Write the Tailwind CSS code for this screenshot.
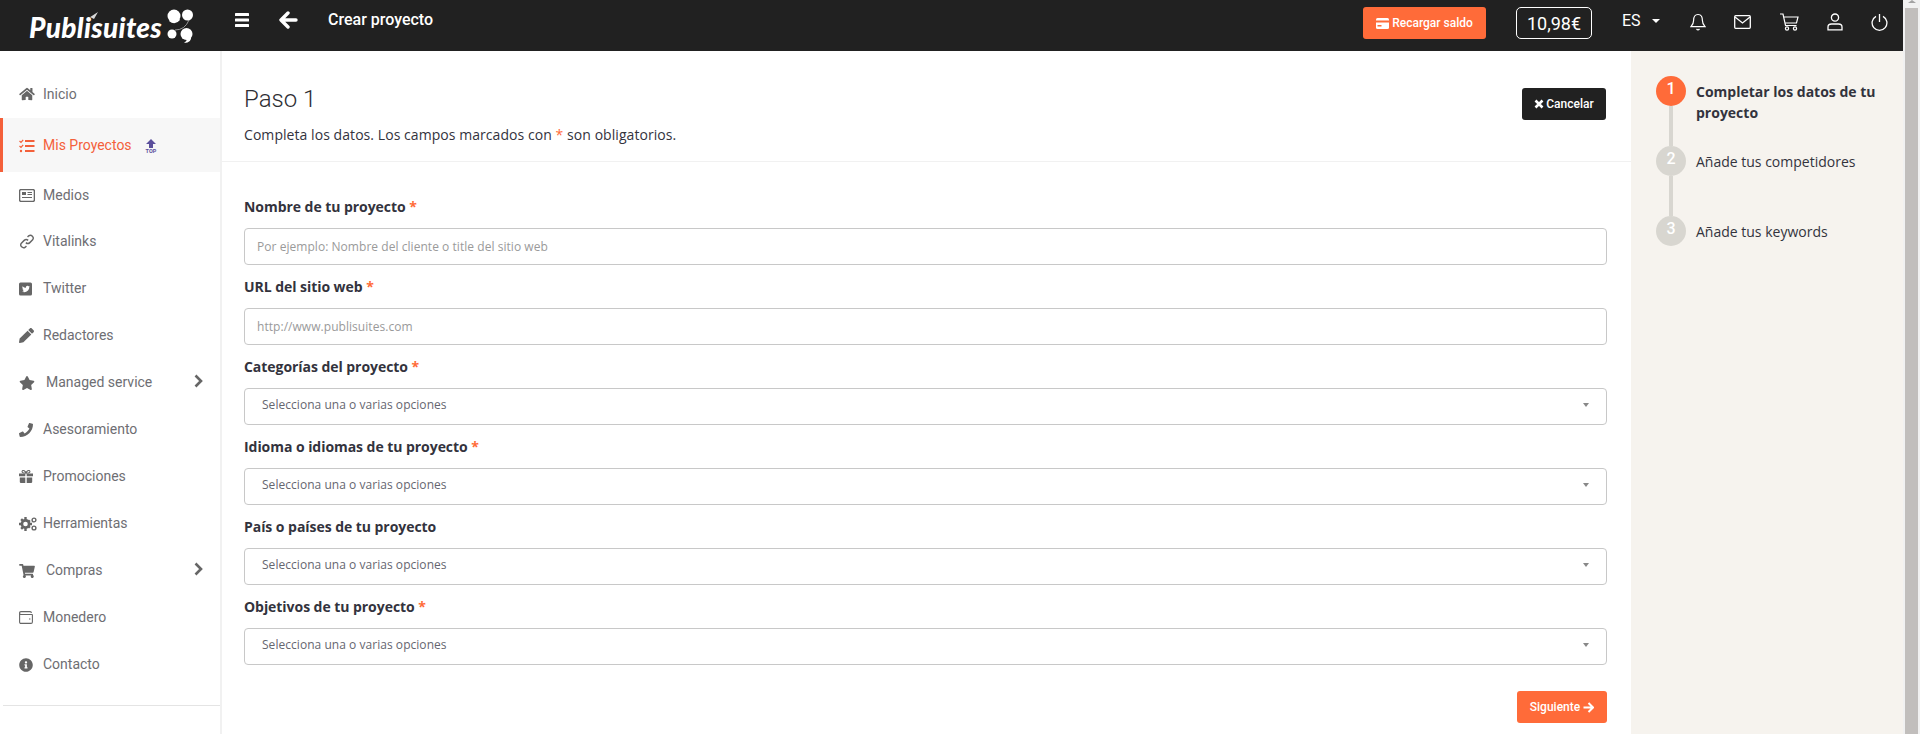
<!DOCTYPE html>
<html lang="es">
<head>
    <meta charset="UTF-8">
    <meta name="viewport" content="width=device-width, initial-scale=1.0">
    <title>Crear proyecto</title>
    <script src="https://cdn.jsdelivr.net/npm/@tailwindcss/browser@4"></script>
</head>
<body class="bg-white font-['Open_Sans',sans-serif] text-[14px] text-[#33333d]">
<div class="flex h-[734px] w-[1920px] overflow-hidden">
    <div class="w-[1903px] shrink-0 flex flex-col">
        <!-- Top bar -->
        <header class="h-[51px] shrink-0 bg-[#212121] flex items-start text-white font-['Roboto',sans-serif]">
            <div class="w-[235px] shrink-0 pl-[29px] pt-[9px] flex items-start">
                <span class="relative font-['Lato',sans-serif] font-black italic text-[28px] leading-[36px] tracking-[0.3px]">Publisuites
                    <svg class="absolute left-[55px] top-[3px]" width="15" height="10" viewBox="0 0 15 10"><path d="M0 9 L14 0 L10 7 L6 5 Z" fill="#d8d8d8"/></svg>
                </span>
                <svg class="ml-[5px] -mt-[0px]" width="26" height="35" viewBox="0 0 26 35" fill="white">
                    <circle cx="7" cy="7" r="6.5"/><circle cx="20.5" cy="6" r="5.5"/><circle cx="5" cy="25" r="4.5"/><circle cx="19.5" cy="25" r="6"/>
                    <path d="M2 12 Q8 17 13 11 L11 8Z M24 27 Q25 34 17 34 Q21 31 20 28Z"/><path d="M8 21 Q18 21 22 11" fill="none" stroke="#ddd" stroke-width=".6"/>
                </svg>
            </div>
            <svg class="mt-[13px] shrink-0" width="14" height="14" viewBox="0 0 14 14" fill="white"><rect width="14" height="3" y="0" rx=".6"/><rect width="14" height="3" y="5.5" rx=".6"/><rect width="14" height="3" y="11" rx=".6"/></svg>
            <svg class="mt-[11px] ml-[30px] shrink-0" width="19" height="18" viewBox="0 0 19 18" fill="none" stroke="white" stroke-width="3.4" stroke-linecap="round" stroke-linejoin="round"><path d="M9 2 L2 9 L9 16 M3 9 H17"/></svg>
            <h1 class="ml-[30px] mt-[10px] text-[16px] leading-[20px] font-medium">Crear proyecto</h1>
            <div class="ml-auto flex items-start pr-[15px]">
                <button class="mt-[7px] h-[32px] w-[123px] rounded-[3px] bg-[#ff6b39] flex items-center justify-center gap-[3px] text-[12px] font-medium">
                    <svg width="13" height="11" viewBox="0 0 13 11"><rect width="13" height="11" rx="1.5" fill="#fff"/><rect y="2.5" width="13" height="2" fill="#ff6b39"/><rect x="1.5" y="7" width="4" height="1.5" fill="#ff6b39"/></svg>
                    Recargar saldo
                </button>
                <div class="mt-[7px] ml-[30px] h-[32px] w-[76px] rounded-[5px] border border-white flex items-center justify-center text-[18px]">10,98€</div>
                <div class="ml-[30px] mt-[11px] w-[60px] flex items-center text-[16px] leading-[20px]">ES<span class="ml-[11px] mt-[-1px] border-x-[4px] border-t-[4px] border-x-transparent border-t-white"></span></div>
                <svg class="mt-[13px] ml-[8px]" width="16" height="18" viewBox="0 0 16 18" fill="none" stroke="white" stroke-width="1.2"><path d="M8 1.5 C4.5 1.5 3.6 4.5 3.6 7.5 C3.6 10.5 2.5 12 1 13.6 H15 C13.5 12 12.4 10.5 12.4 7.5 C12.4 4.5 11.5 1.5 8 1.5Z"/><path d="M6.5 16 Q8 17.6 9.5 16"/></svg>
                <svg class="mt-[15px] ml-[28px]" width="17" height="14" viewBox="0 0 17 14" fill="none" stroke="white" stroke-width="1.3"><rect x=".7" y=".7" width="15.6" height="12.6" rx="1"/><path d="M1 2 L8.5 8 L16 2"/></svg>
                <svg class="mt-[13px] ml-[29px]" width="19" height="18" viewBox="0 0 19 18" fill="none" stroke="white" stroke-width="1.2"><path d="M0 1 H3 L5.5 12.5 H16.5 M3.8 4 H18 L16.5 10 H5"/><circle cx="7" cy="15.5" r="1.6"/><circle cx="15" cy="15.5" r="1.6"/></svg>
                <svg class="mt-[13px] ml-[28px]" width="16" height="18" viewBox="0 0 16 18" fill="none" stroke="white" stroke-width="1.3"><circle cx="8" cy="4.6" r="3.6"/><path d="M1 16.8 V14 Q1 11 4.5 11 H11.5 Q15 11 15 14 V16.8 Z"/></svg>
                <svg class="mt-[13px] ml-[28px]" width="17" height="18" viewBox="0 0 17 18" fill="none" stroke="white" stroke-width="1.3"><path d="M5 3.4 A7.4 7.4 0 1 0 12 3.4"/><path d="M8.5 1 V9"/></svg>
            </div>
        </header>

        <div class="flex flex-1 min-h-0">
            <!-- Sidebar -->
            <aside class="w-[222px] shrink-0 border-r-2 border-[#f1f1f1] pt-[19px] font-['Roboto',sans-serif] text-[14px] text-[#6e6e73]">
                <nav class="flex flex-col">
                    <a class="h-[48px] flex items-center pl-[19px] gap-[8px]">
                        <svg class="w-[16px] h-[14px]" viewBox="0 0 576 512" fill="#666"><path d="M280.37 148.26L96 300.11V464a16 16 0 0 0 16 16l112.06-.29a16 16 0 0 0 15.92-16V368a16 16 0 0 1 16-16h64a16 16 0 0 1 16 16v95.64a16 16 0 0 0 16 16.05L464 480a16 16 0 0 0 16-16V300L295.67 148.26a12.19 12.19 0 0 0-15.3 0zM571.6 251.47L488 182.56V44.05a12 12 0 0 0-12-12h-56a12 12 0 0 0-12 12v72.61L318.47 43a48 48 0 0 0-61 0L4.34 251.47a12 12 0 0 0-1.6 16.9l25.5 31A12 12 0 0 0 45.15 301l235.22-193.74a12.19 12.19 0 0 1 15.3 0L530.9 301a12 12 0 0 0 16.9-1.6l25.5-31a12 12 0 0 0-1.7-16.93z"/></svg>
                        Inicio
                    </a>
                    <a class="h-[54px] pt-[1px] flex items-center pl-[16px] gap-[8px] border-l-[3px] border-[#f4603a] bg-[#f7f7f7] text-[#f4603a]">
                        <svg class="w-[16px] h-[14px]" viewBox="0 0 16 14" fill="none" stroke="#f4603a"><path d="M.5 2 L2 3.4 L4.2.8 M.5 7 L2 8.4 L4.2 5.8" stroke-width="1.2"/><circle cx="2" cy="12" r="1.2" fill="#f4603a" stroke="none"/><path d="M6 2 H15.5 M6 7 H15.5 M6 12 H15.5" stroke-width="2"/></svg>
                        Mis Proyectos
                        <span class="ml-[6px] mt-[1px] flex flex-col items-center">
                            <svg width="10" height="9" viewBox="0 0 10 9" fill="#5b4f9c"><path d="M5 0 L10 5 H7 V9 H3 V5 H0Z"/></svg>
                            <span class="text-[5.5px] leading-[6px] font-bold text-[#5b4f9c]">TOP</span>
                        </span>
                    </a>
                    <a class="h-[46px] flex items-center pl-[19px] gap-[8px]">
                        <svg class="w-[16px] h-[13px]" viewBox="0 0 16 13" fill="none" stroke="#666"><rect x=".6" y=".6" width="14.8" height="11.8" rx="1.5" stroke-width="1.4"/><rect x="3" y="3" width="4" height="3" fill="#666" stroke="none"/><path d="M8.5 3.5 H13 M8.5 5.5 H13 M3 8.5 H13" stroke-width="1.1"/></svg>
                        Medios
                    </a>
                    <a class="h-[47px] flex items-center pl-[19px] gap-[8px]">
                        <svg class="w-[16px] h-[15px]" viewBox="0 0 16 16" fill="none" stroke="#666" stroke-width="1.5"><path d="M6.8 9.2 a3 3 0 0 0 4.2 0 l3-3 a3 3 0 0 0-4.2-4.2 L8.6 3.2"/><path d="M9.2 6.8 a3 3 0 0 0-4.2 0 l-3 3 a3 3 0 0 0 4.2 4.2 L7.4 12.8"/></svg>
                        Vitalinks
                    </a>
                    <a class="h-[47px] flex items-center pl-[19px] gap-[8px]">
                        <svg class="w-[14px] h-[14px] mr-[2px]" viewBox="0 0 14 14"><rect width="13" height="13" y=".5" rx="1.5" fill="#666"/><path d="M3 9.8 Q6.5 11 9 8.5 Q10.5 6.8 10.3 5 L11 4.2 L10 4.4 Q9 3.2 7.6 4 Q6.7 4.7 7 5.8 Q5 5.7 3.5 4.2 Q2.9 5.6 4 6.6 L3.3 6.5 Q3.5 7.7 4.6 8.1 L4 8.2 Q4.4 9 5.2 9.1 Q4.2 9.8 3 9.8Z" fill="#fff"/></svg>
                        Twitter
                    </a>
                    <a class="h-[47px] flex items-center pl-[19px] gap-[8px]">
                        <svg class="w-[15px] h-[15px] mr-[1px]" viewBox="0 0 512 512" fill="#666"><path d="M497.9 142.1l-46.1 46.1c-4.7 4.7-12.3 4.7-17 0l-111-111c-4.7-4.7-4.7-12.3 0-17l46.1-46.1c18.7-18.7 49.1-18.7 67.9 0l60.1 60.1c18.8 18.7 18.8 49.1 0 67.9zM284.2 99.8L21.6 362.4.4 483.9c-2.9 16.4 11.4 30.6 27.8 27.8l121.5-21.3 262.6-262.6c4.7-4.7 4.7-12.3 0-17l-111-111c-4.8-4.7-12.4-4.7-17.1 0z"/></svg>
                        Redactores
                    </a>
                    <a class="h-[47px] flex items-center pl-[19px] pr-[17px] gap-[11px]">
                        <svg class="w-[16px] h-[14px]" viewBox="0 0 576 512" fill="#666"><path d="M259.3 17.8L194 150.2 47.9 171.5c-26.2 3.8-36.7 36.1-17.7 54.6l105.7 103-25 145.5c-4.5 26.3 23.2 46 46.4 33.7L288 439.6l130.7 68.7c23.2 12.2 50.9-7.4 46.4-33.7l-25-145.5 105.7-103c19-18.5 8.5-50.8-17.7-54.6L382 150.2 316.7 17.8c-11.7-23.6-45.6-23.9-57.4 0z"/></svg>
                        Managed service
                        <svg class="ml-auto -mt-[4px]" width="9" height="14" viewBox="0 0 9 14" fill="none" stroke="#666" stroke-width="2.6"><path d="M1.5 1.5 L7 7 L1.5 12.5"/></svg>
                    </a>
                    <a class="h-[47px] flex items-center pl-[19px] gap-[8px]">
                        <svg class="w-[14px] h-[14px] mr-[2px]" viewBox="0 0 512 512" fill="#666"><path d="M493.4 24.6l-104-24c-11.3-2.6-22.9 3.3-27.5 13.9l-48 112c-4.2 9.8-1.4 21.3 6.9 28l60.6 49.6c-36 76.7-98.9 140.5-177.2 177.2l-49.6-60.6c-6.8-8.3-18.2-11.1-28-6.9l-112 48C3.9 366.5-2 378.1.6 389.4l24 104C27.1 504.2 36.7 512 48 512c256.1 0 464-207.5 464-464 0-11.2-7.7-20.9-18.6-23.4z"/></svg>
                        Asesoramiento
                    </a>
                    <a class="h-[47px] flex items-center pl-[19px] gap-[8px]">
                        <svg class="w-[14px] h-[13px] mr-[2px]" viewBox="0 0 14 13" fill="#666"><path d="M0 3.5 H6.3 V6.3 H0Z M7.7 3.5 H14 V6.3 H7.7Z M.8 7.5 H6.3 V13 H2 Q.8 13 .8 12Z M7.7 7.5 H13.2 V12 Q13.2 13 12 13 H7.7Z"/><path d="M7 3 Q3 3.4 3 1.6 Q3.6 0 5.2.8 Q6.5 1.6 7 3 Q7.5 1.6 8.8.8 Q10.4 0 11 1.6 Q11 3.4 7 3Z" fill="none" stroke="#666" stroke-width="1.1"/></svg>
                        Promociones
                    </a>
                    <a class="h-[47px] flex items-center pl-[19px] gap-[6px]">
                        <svg class="w-[18px] h-[14px]" viewBox="0 0 18 14" fill="#666"><circle cx="6.5" cy="7" r="3.6" fill="none" stroke="#666" stroke-width="2.6"/><path d="M5.3 0 H7.7 V3 H5.3Z M5.3 11 H7.7 V14 H5.3Z M0 5.8 H3 V8.2 H0Z M10 5.8 H13 V8.2 H10Z M1.3 2.9 L3 1.2 L4.8 3 L3.1 4.7Z M8.2 9.8 L9.9 8.1 L11.7 9.9 L10 11.6Z M1.3 11.1 L3.1 9.3 L4.8 11 L3 12.8Z M8.2 4.2 L9.9 2.4 L11.7 4.1 L10 5.9Z"/><circle cx="15" cy="3" r="1.9" fill="none" stroke="#666" stroke-width="1.4"/><circle cx="15" cy="11" r="1.9" fill="none" stroke="#666" stroke-width="1.4"/></svg>
                        Herramientas
                    </a>
                    <a class="h-[47px] flex items-center pl-[19px] pr-[17px] gap-[11px]">
                        <svg class="w-[16px] h-[14px]" viewBox="0 0 576 512" fill="#666"><path d="M528.12 301.319l47.273-208C578.806 78.301 567.391 64 551.99 64H159.208l-9.166-44.81C147.758 8.021 137.93 0 126.529 0H24C10.745 0 0 10.745 0 24v16c0 13.255 10.745 24 24 24h69.883l70.248 343.435C147.325 417.1 136 435.222 136 456c0 30.928 25.072 56 56 56s56-25.072 56-56c0-15.674-6.447-29.835-16.824-40h209.647C430.447 426.165 424 440.326 424 456c0 30.928 25.072 56 56 56s56-25.072 56-56c0-22.172-12.888-41.332-31.579-50.405l5.517-24.276c3.413-15.018-8.002-29.319-23.403-29.319H218.117l-6.545-32h293.145c11.206 0 20.92-7.754 23.403-18.681z"/></svg>
                        Compras
                        <svg class="ml-auto -mt-[4px]" width="9" height="14" viewBox="0 0 9 14" fill="none" stroke="#666" stroke-width="2.6"><path d="M1.5 1.5 L7 7 L1.5 12.5"/></svg>
                    </a>
                    <a class="h-[47px] flex items-center pl-[19px] gap-[8px]">
                        <svg class="w-[14px] h-[13px] mr-[2px]" viewBox="0 0 14 13" fill="none" stroke="#666" stroke-width="1.1"><path d="M13.4 3.5 V11 Q13.4 12.4 12 12.4 H2 Q.6 12.4 .6 11 V2 Q.6 .6 2 .6 H11 Q12.4 .6 12.4 2"/><path d="M.8 2.8 Q1.5 3.5 2.5 3.5 H13.4"/><circle cx="10.8" cy="8" r=".7" fill="#666" stroke="none"/></svg>
                        Monedero
                    </a>
                    <a class="h-[47px] flex items-center pl-[19px] gap-[8px]">
                        <svg class="w-[14px] h-[14px] mr-[2px]" viewBox="0 0 512 512" fill="#666"><path d="M256 8C119.043 8 8 119.083 8 256c0 136.997 111.043 248 248 248s248-111.003 248-248C504 119.083 392.957 8 256 8zm0 110c23.196 0 42 18.804 42 42s-18.804 42-42 42-42-18.804-42-42 18.804-42 42-42zm56 254c0 6.627-5.373 12-12 12h-88c-6.627 0-12-5.373-12-12v-24c0-6.627 5.373-12 12-12h12v-64h-12c-6.627 0-12-5.373-12-12v-24c0-6.627 5.373-12 12-12h64c6.627 0 12 5.373 12 12v100h12c6.627 0 12 5.373 12 12v24z"/></svg>
                        Contacto
                    </a>
                </nav>
                <div class="ml-[3px] mt-[17px] border-t border-[#e4e4e4]"></div>
            </aside>

            <!-- Form -->
            <main class="flex-1 min-w-0">
                <div class="h-[111px] border-b border-[#f1f1f1] pl-[22px] pr-[25px] flex justify-between">
                    <div>
                        <h2 class="mt-[31px] font-['Roboto',sans-serif] font-light text-[24px] leading-[34px] text-[#2e2e33]">Paso 1</h2>
                        <p class="mt-[8px] leading-[21px] tracking-[0.06px]">Completa los datos. Los campos marcados con <span class="text-[#ff6b39]">*</span> son obligatorios.</p>
                    </div>
                    <button class="mt-[37px] h-[32px] w-[84px] rounded-[3px] bg-[#212121] text-white font-['Roboto',sans-serif] font-medium text-[12px] flex items-center justify-center gap-[2px]">
                        <svg width="10" height="10" viewBox="0 0 10 10" fill="none" stroke="white" stroke-width="2.6"><path d="M1.5 1.5 L8.5 8.5 M8.5 1.5 L1.5 8.5"/></svg>
                        Cancelar
                    </button>
                </div>
                <form class="pl-[22px] pr-[24px] pt-[35px]">
                    <div class="h-[80px]">
                        <label class="block h-[31px] font-bold leading-[20px] tracking-[-0.05px]">Nombre de tu proyecto <span class="text-[#ff6b39]">*</span></label>
                        <input class="block w-full h-[37px] rounded-[4px] border border-[#c8c8c8] pl-[12px] pb-[1px] text-[12px] tracking-[0.045px] placeholder:text-[#9a9a9a]" placeholder="Por ejemplo: Nombre del cliente o title del sitio web">
                    </div>
                    <div class="h-[80px]">
                        <label class="block h-[31px] font-bold leading-[20px] tracking-[-0.05px]">URL del sitio web <span class="text-[#ff6b39]">*</span></label>
                        <input class="block w-full h-[37px] rounded-[4px] border border-[#c8c8c8] pl-[12px] pb-[1px] text-[12px] tracking-[0.045px] placeholder:text-[#9a9a9a]" placeholder="http://www.publisuites.com">
                    </div>
                    <div class="h-[80px]">
                        <label class="block h-[31px] font-bold leading-[20px] tracking-[-0.05px]">Categorías del proyecto <span class="text-[#ff6b39]">*</span></label>
                        <div class="h-[37px] rounded-[4px] border border-[#c8c8c8] pl-[17px] pr-[17px] pb-[3px] flex items-center justify-between text-[12px] tracking-[0.04px] text-[#666670]">Selecciona una o varias opciones<span class="border-x-[3.5px] border-t-[4px] border-x-transparent border-t-[#888]"></span></div>
                    </div>
                    <div class="h-[80px]">
                        <label class="block h-[31px] font-bold leading-[20px] tracking-[-0.05px]">Idioma o idiomas de tu proyecto <span class="text-[#ff6b39]">*</span></label>
                        <div class="h-[37px] rounded-[4px] border border-[#c8c8c8] pl-[17px] pr-[17px] pb-[3px] flex items-center justify-between text-[12px] tracking-[0.04px] text-[#666670]">Selecciona una o varias opciones<span class="border-x-[3.5px] border-t-[4px] border-x-transparent border-t-[#888]"></span></div>
                    </div>
                    <div class="h-[80px]">
                        <label class="block h-[31px] font-bold leading-[20px] tracking-[-0.05px]">País o países de tu proyecto</label>
                        <div class="h-[37px] rounded-[4px] border border-[#c8c8c8] pl-[17px] pr-[17px] pb-[3px] flex items-center justify-between text-[12px] tracking-[0.04px] text-[#666670]">Selecciona una o varias opciones<span class="border-x-[3.5px] border-t-[4px] border-x-transparent border-t-[#888]"></span></div>
                    </div>
                    <div class="h-[80px]">
                        <label class="block h-[31px] font-bold leading-[20px] tracking-[-0.05px]">Objetivos de tu proyecto <span class="text-[#ff6b39]">*</span></label>
                        <div class="h-[37px] rounded-[4px] border border-[#c8c8c8] pl-[17px] pr-[17px] pb-[3px] flex items-center justify-between text-[12px] tracking-[0.04px] text-[#666670]">Selecciona una o varias opciones<span class="border-x-[3.5px] border-t-[4px] border-x-transparent border-t-[#888]"></span></div>
                    </div>
                    <div class="flex justify-end mt-[14px]">
                        <button type="button" class="h-[32px] w-[90px] rounded-[3px] bg-[#ff6b39] text-white font-['Roboto',sans-serif] font-medium text-[12px] flex items-center justify-center gap-[3px]">
                            Siguiente
                            <svg width="11" height="11" viewBox="0 0 11 11" fill="none" stroke="white" stroke-width="2"><path d="M5.5 1 L10 5.5 L5.5 10 M9.5 5.5 H0.5"/></svg>
                        </button>
                    </div>
                </form>
            </main>

            <!-- Steps -->
            <aside class="w-[272px] shrink-0 bg-[#f6f3ee] pl-[25px] pr-[10px] pt-[25px]">
                <div class="relative h-[70px] flex gap-[10px]">
                    <span class="absolute left-[13px] top-[30px] h-[40px] w-[4px] bg-[#d8d6d0]"></span>
                    <span class="w-[30px] h-[30px] shrink-0 rounded-full bg-[#ff6b39] text-white font-['Roboto',sans-serif] font-medium text-[16px] pb-[4px] flex items-center justify-center">1</span>
                    <p class="font-bold leading-[21px] pt-[5px]">Completar los datos de tu proyecto</p>
                </div>
                <div class="relative h-[70px] flex gap-[10px]">
                    <span class="absolute left-[13px] top-[30px] h-[40px] w-[4px] bg-[#d8d6d0]"></span>
                    <span class="w-[30px] h-[30px] shrink-0 rounded-full bg-[#d8d6d0] text-white font-['Roboto',sans-serif] font-medium text-[16px] pb-[4px] flex items-center justify-center">2</span>
                    <p class="leading-[21px] pt-[5px]">Añade tus competidores</p>
                </div>
                <div class="flex gap-[10px]">
                    <span class="w-[30px] h-[30px] shrink-0 rounded-full bg-[#d8d6d0] text-white font-['Roboto',sans-serif] font-medium text-[16px] pb-[4px] flex items-center justify-center">3</span>
                    <p class="leading-[21px] pt-[5px]">Añade tus keywords</p>
                </div>
            </aside>
        </div>
    </div>
    <!-- Scrollbar -->
    <div class="w-[17px] shrink-0 bg-[#f1f1f1] pl-[2px] pr-[2px] flex flex-col items-center">
        <span class="mt-[0px] h-[3px] border-x-[4px] border-b-[3px] border-x-transparent border-b-[#a3a3a3]"></span>
        <span class="mt-[5px] flex-1 w-full bg-[#c1bebc]"></span>
    </div>
</div>
</body>
</html>
